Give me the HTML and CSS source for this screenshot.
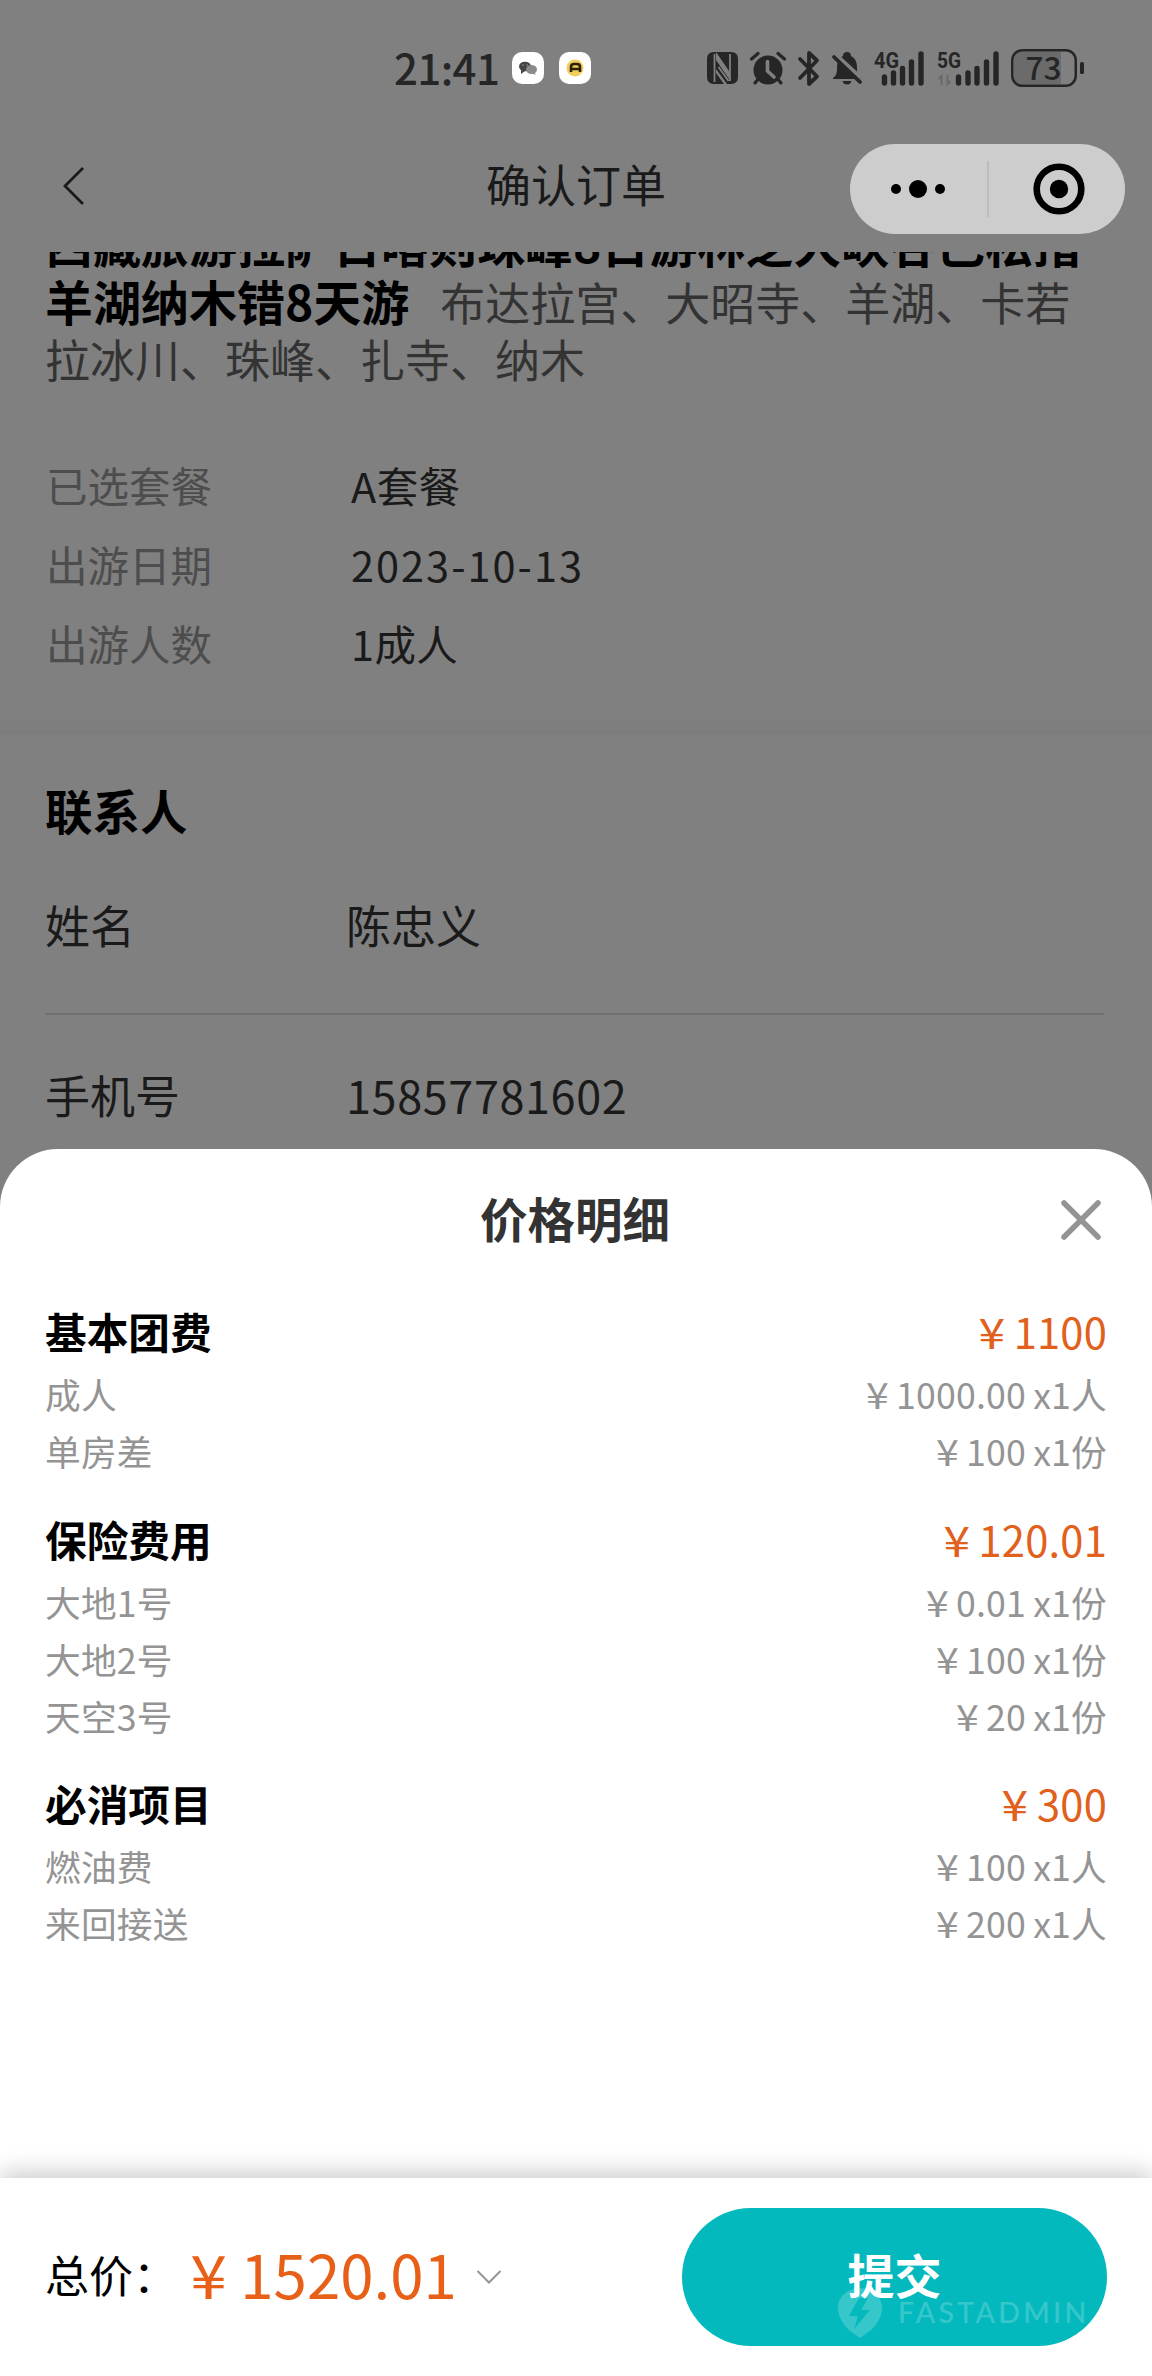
FILE: index.html
```html
<!DOCTYPE html>
<html lang="zh-CN">
<head>
<meta charset="utf-8">
<title>确认订单</title>
<link rel="stylesheet" href="styles.css">
</head>
<body>
<header class="statusbar">
  <span class="time">21:41</span>
  <svg class="app" width="32" height="32" viewBox="0 0 32 32">
    <rect width="32" height="32" rx="10" fill="#fff"/>
    <ellipse cx="13" cy="14.500" rx="6" ry="4.800" fill="#444"/><path d="M9 18l0 4 4-3z" fill="#444"/>
    <ellipse cx="19.500" cy="17.500" rx="5.500" ry="4.500" fill="#8a8a8a"/><path d="M22 20l2 3-5-2z" fill="#8a8a8a"/>
    <circle cx="11" cy="13" r=".8" fill="#999"/><circle cx="15" cy="13" r=".8" fill="#999"/>
  </svg>
  <svg class="app" width="32" height="32" viewBox="0 0 32 32">
    <rect width="32" height="32" rx="10" fill="#fff"/>
    <circle cx="16" cy="16" r="8.500" fill="#f3cd5c"/>
    <path d="M12 20v-5q0-3 3-3h3q3 0 3 3v5M12 17h9" fill="none" stroke="#2b2108" stroke-width="2.600"/>
  </svg>
  <div class="indicators">
    <svg width="31" height="32" viewBox="0 0 31 32">
      <path d="M7 0h2v32H7q-7 0-7-7V7q0-7 7-7zM24 0h-2v32h2q7 0 7-7V7q0-7-7-7z" fill="#262626"/>
      <path d="M9 0l13 19V0h-4M9 0v8l13 19v5h-2L9 17zM9 21l8 11H9z" fill="#262626"/>
      <path d="M7.500 2v28M23 2v27M9.500 4l12 17M11.500 15l10 14" fill="none" stroke="#808080" stroke-width="1.800"/>
    </svg>
    <svg width="36" height="33" viewBox="0 0 36 33">
      <circle cx="18" cy="18" r="14.500" fill="#262626"/>
      <path d="M1.500 7L8 1.500M34.500 7L28 1.500M5 31l4-5M31 31l-4-5" stroke="#262626" stroke-width="3.200" stroke-linecap="round"/>
      <path d="M17.500 9.500V19l6.500 6" fill="none" stroke="#808080" stroke-width="3.600" stroke-linecap="round"/>
    </svg>
    <svg width="22" height="35" viewBox="0 0 22 35">
      <path d="M2 8l17 17.500-8 7.500V2l8 7.500L2 27" fill="none" stroke="#262626" stroke-width="3.800" stroke-linejoin="round" stroke-linecap="round"/>
    </svg>
    <svg width="30" height="34" viewBox="0 0 30 34">
      <path d="M1 27q4-3 4-8v-3q0-8 6-11 0-4 4-4t4 4q6 3 6 11v3q0 5 4 8v1H1z" fill="#262626"/>
      <path d="M10.500 30h9q-1 3.500-4.500 3.500T10.500 30z" fill="#262626"/>
      <path d="M1 1l28 26" stroke="#808080" stroke-width="4"/>
      <path d="M2 6l26 25" stroke="#262626" stroke-width="3.800" stroke-linecap="round"/>
    </svg>
    <svg width="51" height="36" viewBox="0 0 51 36">
      <text class="net" x="0" y="18" textLength="25" lengthAdjust="spacingAndGlyphs">4G</text>
      <path d="M10.500 27v6M19.500 23v10M28.500 18.500V33M37.500 12v21M47 4v29" stroke="#262626" stroke-width="5.400" stroke-linecap="round"/>
    </svg>
    <svg width="62" height="36" viewBox="0 0 62 36">
      <text class="net" x="0" y="18" textLength="24" lengthAdjust="spacingAndGlyphs">5G</text>
      <path d="M4.500 35v-9l-3 3M10.500 25v9l3-3" fill="none" stroke="#696969" stroke-width="2"/>
      <path d="M21.500 27v6M31 23v10M40 18.500V33M49.500 12v21M59 4v29" stroke="#262626" stroke-width="5.400" stroke-linecap="round"/>
    </svg>
    <svg width="73" height="38" viewBox="0 0 73 38">
      <path d="M11 2.500h39v33H11q-8 0-8-8v-17q0-8 8-8z" fill="#6b6b6b"/>
      <rect x="1.250" y="1.250" width="63.500" height="35.500" rx="10" fill="none" stroke="#262626" stroke-width="2.500"/>
      <rect x="69" y="13" width="4" height="12" rx="1.500" fill="#262626"/>
      <text class="level" x="14.500" y="30.500" textLength="36" lengthAdjust="spacingAndGlyphs">73</text>
    </svg>
  </div>
</header>

<nav class="nav">
  <svg class="back" width="22" height="40" viewBox="0 0 22 40"><path d="M20 2L2 20l18 18" fill="none" stroke="#1a1a1a" stroke-width="2.800"/></svg>
  <h1 class="nav-title">确认订单</h1>
  <div class="capsule">
    <svg width="56" height="20" viewBox="0 0 56 20"><circle cx="6" cy="10" r="5"/><circle cx="28" cy="10" r="9"/><circle cx="50" cy="10" r="5"/></svg>
    <i class="bar"></i>
    <svg width="52" height="52" viewBox="0 0 52 52"><circle cx="26" cy="26" r="22.300" fill="none" stroke="#000" stroke-width="6.600"/><circle cx="26" cy="26" r="9.200"/></svg>
  </div>
</nav>

<main class="order">
  <p class="product"><b>西藏旅游拉萨日喀则珠峰8日游林芝大峡谷巴松措羊湖纳木错8天游</b><span class="sights">布达拉宫、大昭寺、羊湖、卡若拉冰川、珠峰、扎寺、纳木</span></p>
  <dl class="facts">
    <div><dt>已选套餐</dt><dd>A套餐</dd></div>
    <div><dt>出游日期</dt><dd class="date">2023-10-13</dd></div>
    <div><dt>出游人数</dt><dd>1成人</dd></div>
  </dl>
  <section class="contact">
    <h2>联系人</h2>
    <div class="field"><span>姓名</span><span>陈忠义</span></div>
    <div class="field"><span>手机号</span><span class="phone">15857781602</span></div>
  </section>
</main>

<section class="sheet">
  <div class="sheet-head">
    <h2>价格明细</h2>
    <svg width="40" height="40" viewBox="0 0 40 40"><path d="M3 3l34 34M37 3L3 37" stroke="#949494" stroke-width="5.500" stroke-linecap="round"/></svg>
  </div>
  <div class="group">
    <div class="sum"><b>基本团费</b><span><i>¥</i>1100</span></div>
    <div class="item"><span>成人</span><span><i>¥</i>1000.00<em>x1人</em></span></div>
    <div class="item"><span>单房差</span><span><i>¥</i>100<em>x1份</em></span></div>
  </div>
  <div class="group">
    <div class="sum"><b>保险费用</b><span><i>¥</i>120.01</span></div>
    <div class="item"><span>大地1号</span><span><i>¥</i>0.01<em>x1份</em></span></div>
    <div class="item"><span>大地2号</span><span><i>¥</i>100<em>x1份</em></span></div>
    <div class="item"><span>天空3号</span><span><i>¥</i>20<em>x1份</em></span></div>
  </div>
  <div class="group">
    <div class="sum"><b>必消项目</b><span><i>¥</i>300</span></div>
    <div class="item"><span>燃油费</span><span><i>¥</i>100<em>x1人</em></span></div>
    <div class="item"><span>来回接送</span><span><i>¥</i>200<em>x1人</em></span></div>
  </div>
</section>

<footer class="paybar">
  <span class="total-label">总价：</span>
  <span class="total"><i>¥</i>1520.01</span>
  <svg width="26" height="16" viewBox="0 0 26 16"><path d="M1.500 2L13 13.500 24.500 2" fill="none" stroke="#949494" stroke-width="2"/></svg>
  <button class="submit" type="button">提交
    <span class="brand">
      <svg width="46" height="50" viewBox="0 0 46 50"><path fill-rule="evenodd" d="M23 0Q34 1 40 7q6 7 5 15-2 12-11 20-5 4-11 8-6-4-11-8Q3 34 1 22 0 14 6 7 12 1 23 0zM22 10L12 28h9l-4 13 16-19h-9l7-12z"/></svg>
      <span>FASTADMIN</span>
    </span>
  </button>
</footer>
</body>
</html>
```
FILE: styles.css
```css
* { box-sizing: border-box; margin: 0; padding: 0; }
body {
  width: 1152px;
  height: 2376px;
  display: flex;
  flex-direction: column;
  background: #808080;
  color: #1a1a1a;
  font-family: "Noto Sans CJK SC", sans-serif;
  font-size: 45px;
  overflow: hidden;
}
i, em { font-style: normal; }
svg { display: block; flex: none; overflow: visible; }

/* status bar */
.statusbar {
  height: 134px;
  flex: none;
  display: flex;
  align-items: center;
  padding: 2px 68px 0 394px;
}
.time { width: 118px; font-size: 42px; line-height: 50px; font-weight: 500; letter-spacing: -.6px; color: #262626; margin-top: -3px; }
.app { margin-right: 15px; }
.indicators { margin-left: auto; display: flex; align-items: center; gap: 12px; }
.net { font: 700 22px Roboto, sans-serif; fill: #262626; }
.level { font: 500 31px "Noto Sans CJK SC", sans-serif; fill: #262626; }

/* navigation */
.nav {
  height: 118px;
  flex: none;
  display: grid;
  grid-template-columns: 423px 182px 1fr;
  align-items: center;
  padding: 0 27px 16px 63px;
}
.back { margin-top: 2px; }
.nav-title { font-size: 45px; line-height: 60px; font-weight: 400; margin-top: -3px; }
.capsule {
  justify-self: end;
  width: 275px;
  height: 90px;
  margin-top: 8px;
  border-radius: 45px;
  background: #cdcdcd;
  display: flex;
  align-items: center;
  padding-left: 40px;
}
.capsule .bar { width: 2px; height: 56px; background: #bcbcbc; margin: 0 44px 0 41px; }

/* order behind the sheet */
.order { height: 897px; flex: none; overflow: hidden; display: flex; flex-direction: column; }
.product { padding: 0 45px; margin-top: -38px; height: 171px; flex: none; line-height: 57px; color: #333; }
.product b { font-size: 48px; line-height: 57px; color: #000; }
.sights { margin-left: 31px; }
.facts {
  height: 350px;
  flex: none;
  padding: 61px 45px 0 46px;
  font-size: 41.500px;
  line-height: 79px;
  background: linear-gradient(#808080, #7c7c7c) bottom / 100% 22px no-repeat;
}
.facts div { display: flex; }
.facts dt { width: 305px; color: #4d4d4d; }
.facts dd { letter-spacing: .4px; }
.facts .date { letter-spacing: 2px; }
.contact { padding: 0 48px 0 45px; }
.contact h2 { font-size: 47.500px; line-height: 70px; padding-top: 40px; color: #000; }
.field { height: 170px; padding-bottom: 9px; display: flex; align-items: center; border-bottom: 2px solid #707070; }
.field span:first-child { width: 301px; }
.phone { letter-spacing: .6px; }

/* price sheet */
.sheet { height: 1029px; flex: none; background: #fff; border-radius: 58px 58px 0 0; padding: 0 45px; }
.sheet-head { height: 152px; display: flex; justify-content: flex-end; align-items: center; padding: 0 6px 10px 0; }
.sheet-head h2 { font-size: 47.500px; line-height: 70px; color: #333; margin: -4px 391px 0 0; }
.group { margin-bottom: 27.500px; }
.sum, .item { display: flex; justify-content: space-between; }
.sum { font-size: 41.700px; line-height: 61px; height: 66px; color: #000; }
.sum > span { color: #e0601c; letter-spacing: .2px; }
.sum i, .item i { display: inline-block; transform: scaleX(1.15); transform-origin: right; margin-right: .2em; }
.item { font-size: 35.700px; line-height: 53px; height: 57px; color: #949494; letter-spacing: .2px; }
.item em { margin-left: 7px; }

/* pay bar */
.paybar {
  height: 198px;
  flex: none;
  background: #fff;
  box-shadow: 0 -6px 22px rgba(0, 0, 0, .2);
  display: flex;
  align-items: center;
  padding: 0 45px;
}
.total-label { width: 147px; font-size: 44px; color: #000; white-space: nowrap; margin-top: -6px; }
.total { width: 284px; font-size: 60px; line-height: 80px; color: #e85f17; margin-top: -9px; white-space: nowrap; }
.total i { display: inline-block; transform: scaleX(1.1); margin-right: 15px; }
.submit {
  position: relative;
  margin-left: auto;
  width: 425px;
  height: 138px;
  border: 0;
  border-radius: 69px;
  background: #03b9be;
  color: #fff;
  font: 700 47px/60px "Noto Sans CJK SC", sans-serif;
  padding-bottom: 6px;
}
.brand { position: absolute; left: 155px; top: 80px; display: flex; align-items: center; gap: 15px; opacity: .2; font: 500 28.500px/40px Lato, sans-serif; letter-spacing: 3.300px; }
.brand span { margin-top: -2px; }
.brand svg { fill: #fff; }
```
